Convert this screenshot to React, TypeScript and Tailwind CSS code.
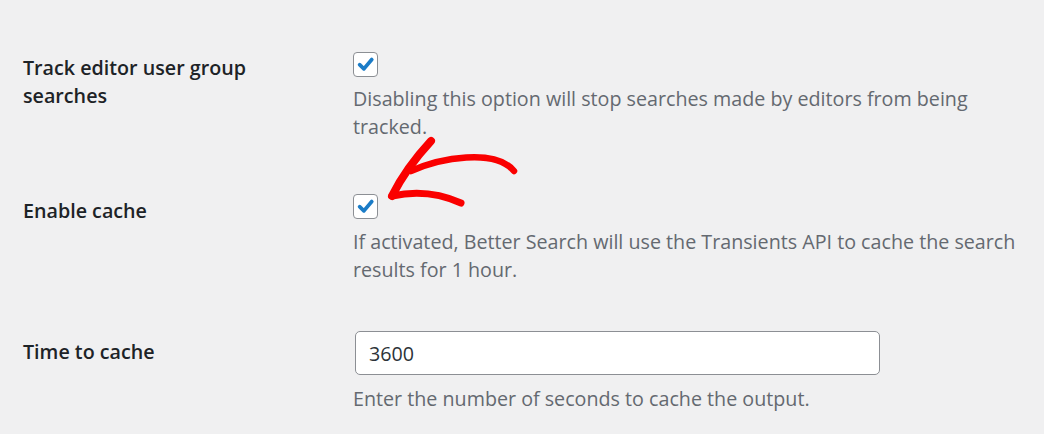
import React from 'react'

const font = { fontFamily: '"Open Sans", "Noto Sans", Arial, sans-serif' }

function CheckBox() {
  return (
    <span className="flex h-[25px] w-[25px] items-center justify-center rounded-[4px] border border-[#8c8f94] bg-white">
      <svg width="19" height="19" viewBox="0 0 20 20" fill="none">
        <path d="M3.8 10.2 L8.3 14.6 L16.6 4.8" stroke="#1b7cc7" strokeWidth="3.9" strokeLinecap="round" strokeLinejoin="round" />
      </svg>
    </span>
  )
}

function Arrow() {
  return (
    <svg className="pointer-events-none absolute left-0 top-0" width="1044" height="434" viewBox="0 0 1044 434" fill="none">
      <g stroke="#fa0000" strokeLinecap="round" strokeLinejoin="round">
        <path d="M431 141 Q 406 168 392 196" strokeWidth="8" />
        <path d="M392 196 Q 428 188 461 203" strokeWidth="7" />
        <path d="M411 171 C 440 158 495 148 514 171" strokeWidth="6.5" />
      </g>
    </svg>
  )
}

export default function App() {
  return (
    <div className="relative h-[434px] w-[1044px] overflow-hidden bg-[#f0f0f1]" style={font}>
      <div className="flex flex-col pt-[52px]">
        <div className="flex">
          <div className="w-[353px] shrink-0 pl-[23px] pr-[10px] pt-[2px] text-[19.7px] font-semibold leading-[28px] text-[#1d2327]">
            Track editor user group
            <br />
            searches
          </div>
          <div className="flex flex-col gap-[8px] pr-[10px]">
            <CheckBox />
            <p className="text-[19.7px] leading-[28px] text-[#646970]">
              Disabling this option will stop searches made by editors from being tracked.
            </p>
          </div>
        </div>

        <div className="mt-[53px] flex">
          <div className="w-[353px] shrink-0 pl-[23px] pr-[10px] pt-[3px] text-[19.7px] font-semibold leading-[28px] text-[#1d2327]">
            Enable cache
          </div>
          <div className="flex flex-col gap-[9px] pr-[10px]">
            <CheckBox />
            <p className="text-[19.7px] leading-[28px] text-[#646970]">
              If activated, Better Search will use the Transients API to cache the search results for 1 hour.
            </p>
          </div>
        </div>

        <div className="mt-[47px] flex">
          <div className="w-[353px] shrink-0 pl-[23px] pr-[10px] pt-[7px] text-[19.7px] font-semibold leading-[28px] text-[#1d2327]">
            Time to cache
          </div>
          <div className="flex flex-col gap-[10px] pl-[2px] pr-[10px]">
            <input
              type="text"
              defaultValue="3600"
              className="h-[44px] w-[525px] rounded-[5px] border border-[#8c8f94] bg-white px-[13px] text-[19.7px] text-[#2c3338] outline-none"
            />
            <p className="-ml-[2px] text-[19.7px] leading-[28px] text-[#646970]">
              Enter the number of seconds to cache the output.
            </p>
          </div>
        </div>
      </div>
      <Arrow />
    </div>
  )
}
